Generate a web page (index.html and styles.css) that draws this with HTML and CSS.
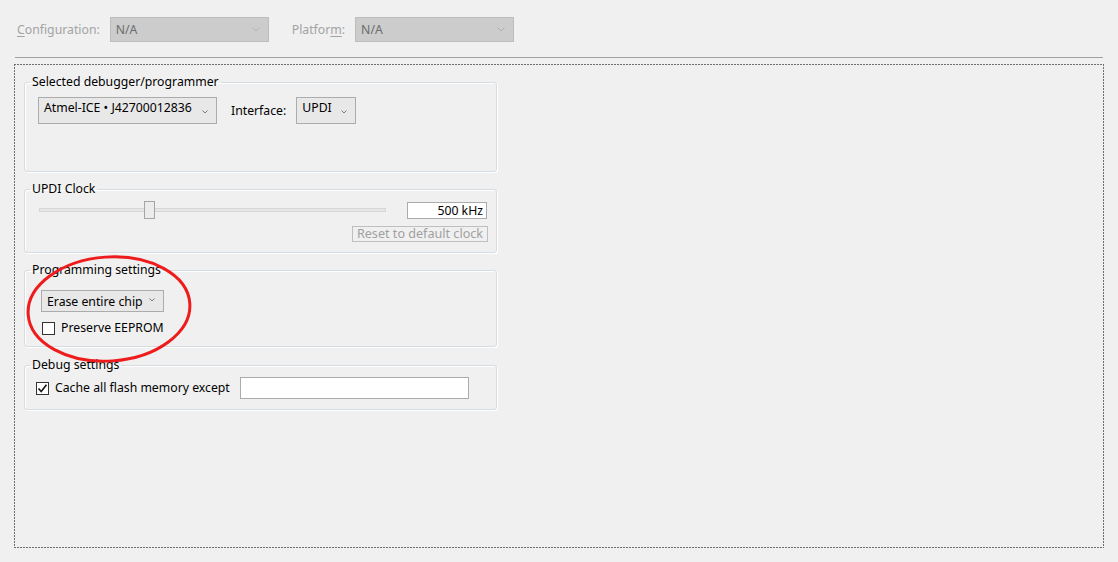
FILE: index.html
```html
<!DOCTYPE html>
<html lang="en">
<head>
<meta charset="utf-8">
<title>Tool settings</title>
<link rel="stylesheet" href="styles.css">
</head>
<body>
<div class="topbar">
  <span class="toplabel"><u>C</u>onfiguration:</span>
  <div class="combo disabled cfg"><span class="ctext">N/A</span><svg class="arrow" width="8" height="5" viewBox="0 0 8 5"><polyline points="0.5,0.5 4,4 7.5,0.5" fill="none" stroke="#b0b0b0" stroke-width="1"/></svg></div>
  <span class="toplabel plat">Platfor<u>m</u>:</span>
  <div class="combo disabled plt"><span class="ctext">N/A</span><svg class="arrow" width="8" height="5" viewBox="0 0 8 5"><polyline points="0.5,0.5 4,4 7.5,0.5" fill="none" stroke="#b0b0b0" stroke-width="1"/></svg></div>
</div>
<div class="sep"></div>
<div class="panel">
  <fieldset class="group g1">
    <legend>Selected debugger/programmer</legend>
    <div class="row r1">
      <div class="combo top tool"><span class="ctext">Atmel-ICE • J42700012836</span><svg class="arrow low" width="6" height="4" viewBox="0 0 6 4"><polyline points="0.5,0.5 3,3 5.5,0.5" fill="none" stroke="#7a7a7a" stroke-width="1"/></svg></div>
      <span class="lbl">Interface:</span>
      <div class="combo top iface"><span class="ctext">UPDI</span><svg class="arrow low" width="6" height="4" viewBox="0 0 6 4"><polyline points="0.5,0.5 3,3 5.5,0.5" fill="none" stroke="#7a7a7a" stroke-width="1"/></svg></div>
    </div>
  </fieldset>

  <fieldset class="group g2">
    <legend>UPDI Clock</legend>
    <div class="row r2">
      <div class="slider"><div class="track"></div><div class="thumb" style="left: 105px"></div></div>
      <div class="textbox freq">500 kHz</div>
    </div>
    <div class="row r2b">
      <div class="button disabled-btn">Reset to default clock</div>
    </div>
  </fieldset>

  <fieldset class="group g3">
    <legend>Programming settings</legend>
    <div class="row r3">
      <div class="combo erase"><span class="ctext">Erase entire chip</span><svg class="arrow high" width="6" height="4" viewBox="0 0 6 4"><polyline points="0.5,0.5 3,3 5.5,0.5" fill="none" stroke="#7a7a7a" stroke-width="1"/></svg></div>
    </div>
    <div class="row r3b">
      <span class="check"></span><span class="clabel">Preserve EEPROM</span>
    </div>
  </fieldset>

  <fieldset class="group g4">
    <legend>Debug settings</legend>
    <div class="row r4">
      <span class="check checked"><svg width="11" height="11" viewBox="0 0 11 11"><polyline points="1.5,5.5 4.2,8.5 9.5,1.8" fill="none" stroke="#1a1a1a" stroke-width="1.7"/></svg></span><span class="clabel">Cache all flash memory except</span>
      <div class="textbox except"></div>
    </div>
  </fieldset>
</div>
<svg class="annot" width="200" height="125" viewBox="0 0 200 125"><ellipse cx="92" cy="57" rx="81" ry="52" transform="rotate(-4 92 57)" fill="none" stroke="#ee1c1c" stroke-width="3"/></svg>
</body>
</html>
```
FILE: styles.css
```css
html, body {
  margin: 0;
  padding: 0;
}
body {
  background: #f0f0f0;
  width: 1118px;
  height: 562px;
  position: relative;
  overflow: hidden;
  font-family: "Noto Sans", "Open Sans", sans-serif;
  font-size: 12.25px;
  color: #000;
}

/* top bar */
.topbar {
  display: flex;
  align-items: center;
  padding: 17px 0 0 17px;
  height: 25px;
}
.toplabel {
  color: #a3a3a3;
  margin-right: 10px;
}
.toplabel u {
  text-decoration-thickness: 1px;
  text-underline-offset: 2px;
}
.toplabel.plat {
  margin-left: 23px;
}

.combo {
  box-sizing: border-box;
  display: flex;
  border: 1px solid #acacac;
  background: #e8e8e8;
  position: relative;
}
.combo .ctext {
  flex: 1;
  white-space: nowrap;
}
.combo.disabled {
  background: #cccccc;
  border-color: #bdbdbd;
  height: 25px;
  align-items: center;
  padding: 0 8px 0 5px;
  color: #6d6d6d;
}
.combo.cfg,
.combo.plt {
  width: 159px;
}

.sep {
  height: 1px;
  background: #a0a0a0;
  margin: 15px 15px 0 15px;
}

/* dashed panel */
.panel {
  box-sizing: border-box;
  margin: 6px 14px 0 14px;
  height: 484px;
  padding: 9px 0 0 10px;
  background:
    linear-gradient(to right, #6e6e6e 66%, transparent 0) top left / 3px 1px repeat-x,
    linear-gradient(to right, #6e6e6e 66%, transparent 0) bottom left / 3px 1px repeat-x,
    linear-gradient(to bottom, #6e6e6e 66%, transparent 0) top left / 1px 3px repeat-y,
    linear-gradient(to bottom, #6e6e6e 66%, transparent 0) top right / 1px 3px repeat-y;
  display: flex;
  flex-direction: column;
  gap: 8px;
}

.group {
  box-sizing: border-box;
  width: 473px;
  margin: 0;
  padding: 0;
  border: 1px solid #d6dde2;
  border-radius: 3px;
  box-shadow: inset 1px 1px 0 #ffffff, 1px 1px 0 #ffffff;
  min-inline-size: 0;
}
.group legend {
  padding: 0 2px;
  margin-left: 5px;
  line-height: 18px;
  height: 18px;
}
.g4 {
  margin-top: 1px;
}

.row {
  display: flex;
  align-items: center;
}

/* group 1 */
.r1 {
  margin-top: 6px;
  padding-left: 13px;
  padding-bottom: 47px;
  align-items: flex-start;
}
.combo.top {
  height: 27px;
  padding: 1px 8px 0 5px;
  align-items: flex-start;
  line-height: 18px;
}
.combo.tool {
  width: 179px;
}
.combo.iface {
  width: 60px;
}
.arrow.low {
  margin-top: 11px;
}
.lbl {
  margin: 5px 10px 0 14px;
  line-height: 18px;
}

/* group 2 */
.r2 {
  margin-top: 3px;
  padding-left: 14px;
}
.slider {
  position: relative;
  width: 347px;
  height: 18px;
  display: flex;
  align-items: center;
}
.track {
  box-sizing: border-box;
  width: 100%;
  height: 4px;
  background: #e7e7e7;
  border: 1px solid #d6d6d6;
}
.thumb {
  position: absolute;
  top: 0;
  box-sizing: border-box;
  width: 11px;
  height: 18px;
  background: #ececec;
  border: 1px solid #a5a5a5;
}
.textbox {
  box-sizing: border-box;
  background: #fff;
  border: 1px solid #ababab;
}
.freq {
  margin-left: 21px;
  width: 80px;
  height: 17px;
  line-height: 15px;
  text-align: right;
  padding-right: 3px;
}
.r2b {
  justify-content: flex-end;
  padding-right: 8px;
  margin-top: 7px;
  padding-bottom: 10px;
}
.button {
  box-sizing: border-box;
  height: 16px;
  width: 136px;
  border: 1px solid #bfbfbf;
  color: #a0a0a0;
  text-align: center;
  line-height: 14px;
  font-size: 12.6px;
}

/* group 3 */
.r3 {
  margin-top: 11px;
  padding-left: 16px;
}
.combo.erase {
  width: 123px;
  height: 22px;
  padding: 0 8px 0 5px;
  align-items: center;
}
.arrow.high {
  margin-top: -3px;
}
.r3b {
  margin-top: 7px;
  padding-left: 17px;
  padding-bottom: 9px;
}
.check {
  box-sizing: border-box;
  width: 13px;
  height: 13px;
  border: 1px solid #333;
  background: #fff;
  display: flex;
  align-items: center;
  justify-content: center;
}
.clabel {
  margin-left: 6px;
  line-height: 18px;
}

/* group 4 */
.r4 {
  margin-top: 3px;
  padding-left: 11px;
  padding-bottom: 10px;
}
.except {
  margin-left: 10px;
  width: 229px;
  height: 22px;
}

/* red annotation */
.annot {
  position: absolute;
  left: 17px;
  top: 252px;
}
```
